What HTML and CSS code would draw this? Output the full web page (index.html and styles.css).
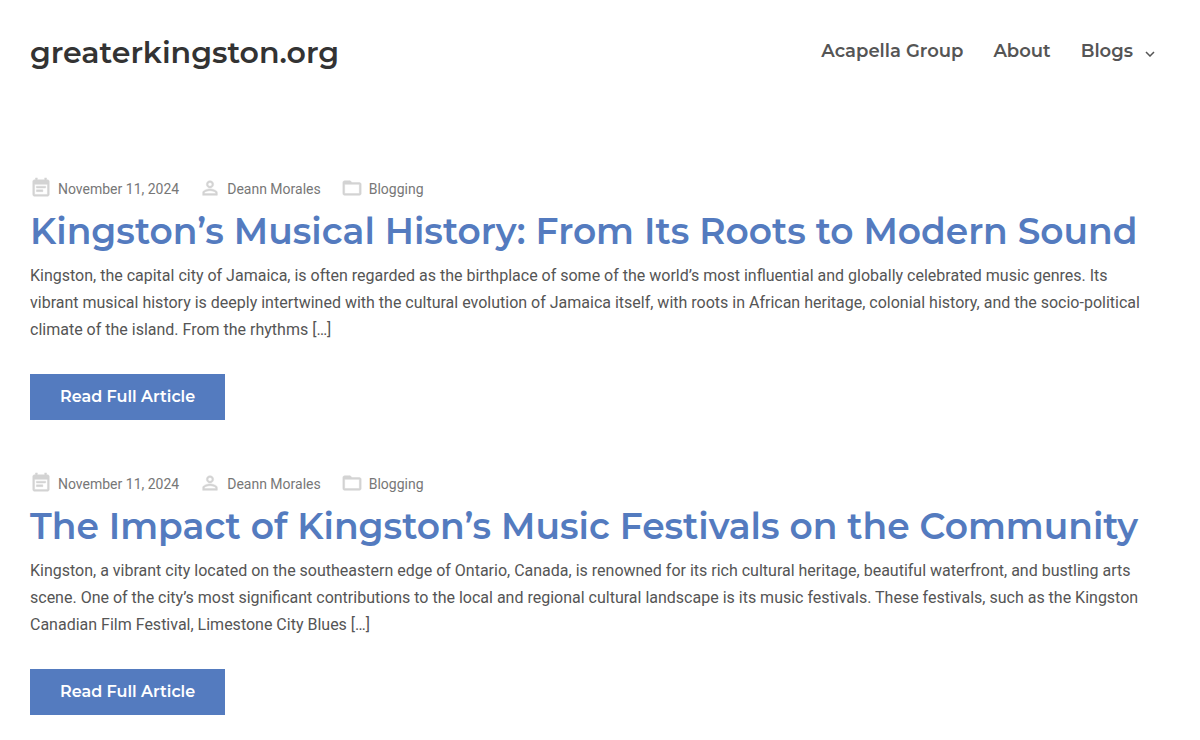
FILE: index.html
```html
<!DOCTYPE html>
<html lang="en">
<head>
  <meta charset="UTF-8">
  <meta name="viewport" content="width=device-width, initial-scale=1.0">
  <title>greaterkingston.org</title>
  <link rel="stylesheet" href="styles.css">
</head>
<body>
<svg class="icon-defs" aria-hidden="true">
  <symbol id="icon-date" viewBox="0 0 24 24">
    <path d="M17 10H7v2h10v-2zm2-7h-1V1h-2v2H8V1H6v2H5c-1.110 0-1.990.9-1.990 2L3 19c0 1.100.890 2 2 2h14c1.100 0 2-.9 2-2V5c0-1.100-.9-2-2-2zm0 16H5V8h14v11zm-5-5H7v2h7v-2z"/>
  </symbol>
  <symbol id="icon-author" viewBox="0 0 24 24">
    <path d="M12 5.900a2.100 2.100 0 1 1 0 4.200 2.100 2.100 0 0 1 0-4.200m0 9c2.970 0 6.100 1.460 6.100 2.100v1.100H5.900V17c0-.640 3.130-2.100 6.100-2.100M12 4C9.790 4 8 5.790 8 8s1.790 4 4 4 4-1.790 4-4-1.790-4-4-4zm0 9c-2.670 0-8 1.340-8 4v3h16v-3c0-2.660-5.330-4-8-4z"/>
  </symbol>
  <symbol id="icon-folder" viewBox="0 0 24 24">
    <path d="M20 6h-8l-2-2H4c-1.100 0-1.990.9-1.990 2L2 18c0 1.100.9 2 2 2h16c1.100 0 2-.9 2-2V8c0-1.100-.9-2-2-2zm0 12H4V8h16v10z"/>
  </symbol>
</svg>

<header class="site-header">
  <a class="site-title" href="#">greaterkingston.org</a>
  <nav class="main-nav">
    <a href="#">Acapella Group</a>
    <a href="#">About</a>
    <a class="has-children" href="#">Blogs
      <svg class="chevron" viewBox="0 0 10 6" aria-hidden="true"><path d="M1 1l4 4 4-4"/></svg>
    </a>
  </nav>
</header>

<main class="posts">
  <article class="post">
    <div class="post-meta">
      <a href="#"><svg class="icon" aria-hidden="true"><use href="#icon-date"/></svg>November 11, 2024</a>
      <a href="#"><svg class="icon" aria-hidden="true"><use href="#icon-author"/></svg>Deann Morales</a>
      <a href="#"><svg class="icon" aria-hidden="true"><use href="#icon-folder"/></svg>Blogging</a>
    </div>
    <h2 class="post-title"><a href="#">Kingston’s Musical History: From Its Roots to Modern Sound</a></h2>
    <p class="excerpt">Kingston, the capital city of Jamaica, is often regarded as the birthplace of some of the world’s most influential and globally celebrated music genres. Its vibrant musical history is deeply intertwined with the cultural evolution of Jamaica itself, with roots in African heritage, colonial history, and the socio-political climate of the island. From the rhythms […]</p>
    <a class="read-more" href="#">Read Full Article</a>
  </article>

  <article class="post">
    <div class="post-meta">
      <a href="#"><svg class="icon" aria-hidden="true"><use href="#icon-date"/></svg>November 11, 2024</a>
      <a href="#"><svg class="icon" aria-hidden="true"><use href="#icon-author"/></svg>Deann Morales</a>
      <a href="#"><svg class="icon" aria-hidden="true"><use href="#icon-folder"/></svg>Blogging</a>
    </div>
    <h2 class="post-title"><a href="#">The Impact of Kingston’s Music Festivals on the Community</a></h2>
    <p class="excerpt">Kingston, a vibrant city located on the southeastern edge of Ontario, Canada, is renowned for its rich cultural heritage, beautiful waterfront, and bustling arts scene. One of the city’s most significant contributions to the local and regional cultural landscape is its music festivals. These festivals, such as the Kingston Canadian Film Festival, Limestone City Blues […]</p>
    <a class="read-more" href="#">Read Full Article</a>
  </article>
</main>
</body>
</html>
```
FILE: styles.css
```css
* {
  box-sizing: border-box;
}

body {
  margin: 0;
  background-color: #fff;
  color: #555;
  font-family: Roboto, sans-serif;
  font-size: 16px;
  line-height: 27px;
}

a {
  color: inherit;
  text-decoration: none;
}

.icon-defs {
  display: none;
}

.site-header {
  display: flex;
  align-items: flex-start;
  justify-content: space-between;
  padding: 30px 45px 30px 30px;
  font-family: Montserrat, sans-serif;
}

.site-title {
  color: #333;
  font-size: 30px;
  font-weight: 600;
  line-height: 46px;
}

.main-nav {
  display: flex;
  gap: 30px;
  font-size: 18px;
  font-weight: 600;
  line-height: 42px;
}

.has-children {
  display: flex;
  align-items: center;
  gap: 12px;
}

.chevron {
  width: 10px;
  height: 6px;
  margin-top: 6px;
  fill: none;
  stroke: #555;
  stroke-width: 1.5;
}

.posts {
  padding: 68px 45px 0 30px;
}

.post {
  margin-bottom: 49px;
}

.post-meta {
  display: flex;
  gap: 20px;
  color: #777;
  font-size: 14px;
  line-height: 30px;
}

.post-meta a {
  display: flex;
  align-items: center;
  gap: 6px;
}

.icon {
  width: 22px;
  height: 22px;
  margin-bottom: 2px;
  fill: #d3d3d3;
  stroke: #d3d3d3;
  stroke-width: 0.5;
}

.post-title {
  margin: 0 0 4px;
  color: #547bbf;
  font-family: Montserrat, sans-serif;
  font-size: 36px;
  font-weight: 600;
  line-height: 54px;
}

.excerpt {
  margin: 0 0 31px;
}

.read-more {
  display: inline-block;
  padding: 10px 30px;
  background-color: #547bbf;
  color: #fff;
  font-family: Montserrat, sans-serif;
  font-size: 16px;
  font-weight: 600;
  line-height: 26px;
  vertical-align: top;
}
```
